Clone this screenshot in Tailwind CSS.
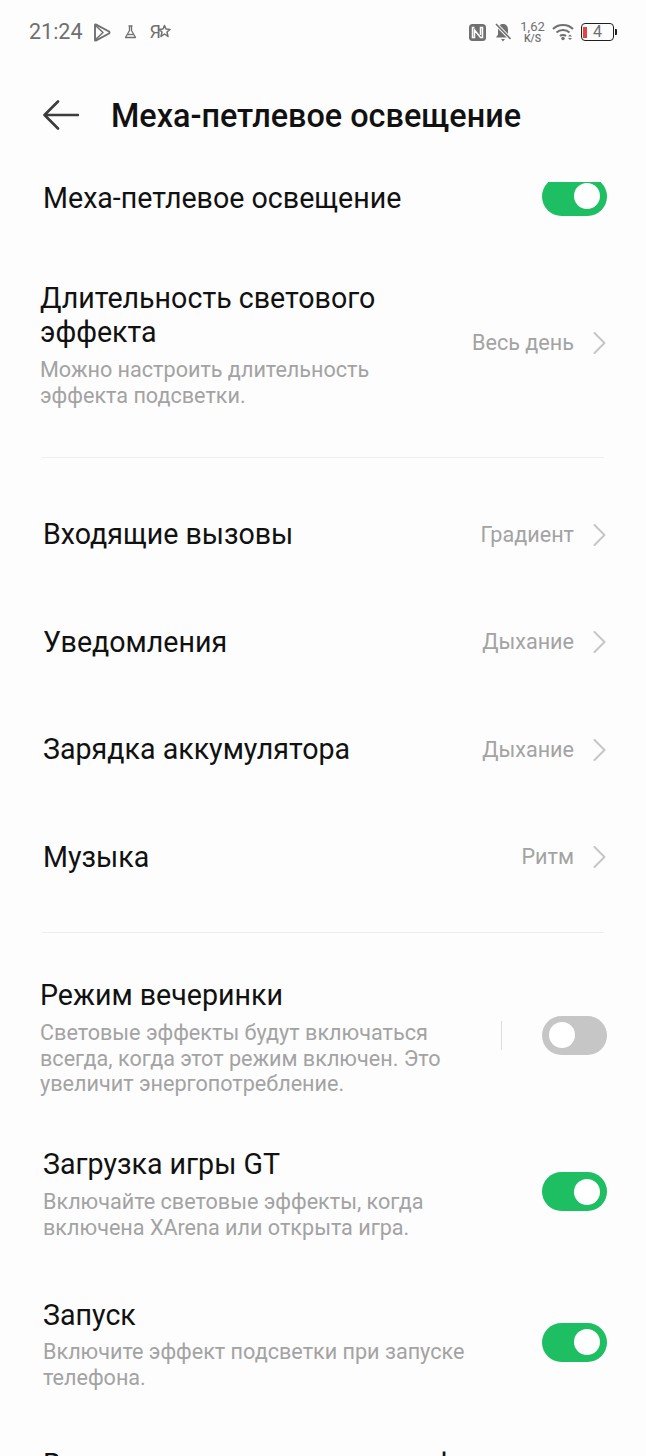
<!DOCTYPE html>
<html lang="ru">

<head>
    <meta charset="UTF-8">
    <meta name="viewport" content="width=device-width, initial-scale=1.0">
    <title>Меха-петлевое освещение</title>
    <script src="https://cdn.jsdelivr.net/npm/@tailwindcss/browser@4"></script>
</head>

<body class="bg-[#fdfdfd] font-['Roboto',sans-serif]">
    <div class="w-[646px] h-[1456px] overflow-hidden flex flex-col">

        <!-- Status bar -->
        <div class="h-[64px] shrink-0 flex items-center justify-between pl-[29px] pr-[29px] text-[#6f6f6f]">
            <div class="flex items-center">
                <span class="text-[21.5px] leading-none">21:24</span>
                <svg class="ml-[10px]" width="18" height="19" viewBox="0 0 18 19" fill="none" stroke="#707070" stroke-width="1.9" stroke-linejoin="round">
                    <path d="M2 2 Q2 1 3.2 1.6 L16 8.5 Q17 9.5 16 10.5 L3.2 17.4 Q2 18 2 17 Z" />
                    <path d="M2.5 2.5 L10 9.5 L2.5 16.5" stroke-width="1.5" />
                </svg>
                <svg class="ml-[13px]" width="13" height="14" viewBox="0 0 13 14" fill="none" stroke="#707070" stroke-width="1.3" stroke-linejoin="round">
                    <path d="M4.5 1 H8.5 M5.5 1 V5.5 L1.5 12.5 H11.5 L7.5 5.5 V1" />
                    <path d="M3.5 9.5 H9.5" />
                </svg>
                <span class="ml-[13px] text-[18px] leading-none">Я</span>
                <svg class="-ml-[3px] -mt-[3px]" width="13" height="14" viewBox="0 0 13 14" fill="none" stroke="#707070" stroke-width="1.5" stroke-linejoin="round">
                    <path d="M6.5 1.5 L8 5 L12 5.4 L9 8 L10 12.5 L6.5 10 L3 12.5 L4 8 L1 5.4 L5 5 Z" />
                </svg>
            </div>
            <div class="flex items-center">
                <svg width="17" height="17" viewBox="0 0 17 17">
                    <rect x="0" y="0" width="17" height="17" rx="3.5" fill="#707070" />
                    <path d="M5.5 3.5 H3.5 V13.5 H5.5 V6 L11.5 13.5 H13.5 V3.5 H11.5 V11" fill="none" stroke="#fdfdfd" stroke-width="1.5" />
                </svg>
                <svg class="ml-[9px]" width="16" height="19" viewBox="0 0 16 19">
                    <path d="M8 1 C4.5 1 3 3.5 3 6.5 V11.5 L1 14.5 H15 L13 11.5 V6.5 C13 3.5 11.5 1 8 1 Z" fill="#707070" />
                    <path d="M6 16 H10 L8 18.5 Z" fill="#707070" />
                    <path d="M1 1 L15.5 16" stroke="#fdfdfd" stroke-width="3.5" />
                    <path d="M1 1 L15.5 16" stroke="#707070" stroke-width="1.6" />
                </svg>
                <div class="ml-[11px] w-[22px] flex flex-col items-center text-[#707070]">
                    <span class="text-[13px] leading-[13px]">1,62</span>
                    <span class="text-[10.5px] leading-[11px] font-medium">K/S</span>
                </div>
                <svg class="ml-[8px]" width="22" height="18" viewBox="0 0 22 18" fill="none" stroke="#707070" stroke-width="2">
                    <path d="M1 6 C6 0.5 16 0.5 21 6" />
                    <path d="M4.5 9.5 C8 6 14 6 17.5 9.5" />
                    <path d="M8 13 C9.5 11.5 12.5 11.5 14 13" />
                    <circle cx="11" cy="15.5" r="1.7" fill="#707070" stroke="none" />
                    <path d="M18 11.5 L20 13.5 H16 Z M16 15 H20 L18 17 Z" fill="#707070" stroke="none" />
                </svg>
                <div class="ml-[7px] flex items-center">
                    <div class="relative w-[33px] h-[18px] rounded-[4px] border-[1.5px] border-[#1f1f1f] flex items-center justify-center text-[16px] leading-none text-[#6f6f6f]">
                        <div class="absolute left-[1.5px] top-[2.5px] bottom-[2.5px] w-[4px] bg-[#e2463f]"></div>
                        <span class="ml-[1px]">4</span>
                    </div>
                    <div class="w-[2.5px] h-[6px] ml-[1px] bg-[#1f1f1f] rounded-r-[1px]"></div>
                </div>
            </div>
        </div>

        <!-- Header -->
        <div class="h-[118px] shrink-0 flex items-center pl-[43px] pb-[14px]">
            <svg class="-mt-[2px]" width="36" height="30" viewBox="0 0 36 30" fill="none" stroke="#3c3c3c" stroke-width="2.6" stroke-linecap="round" stroke-linejoin="round">
                <path d="M35 15 H2 M15 1.5 L1.5 15 L15 28.5" />
            </svg>
            <h1 class="ml-[32px] text-[32.4px] leading-none font-medium text-[#111]">Меха-петлевое освещение</h1>
        </div>

        <!-- Scroll area, clipped under the header -->
        <div class="flex-1 overflow-hidden">
            <div class="-mt-[6px]">

                <div class="h-[44px] flex items-center justify-between pl-[43px] pr-[39px]">
                    <span class="text-[28.6px] text-[#111]">Меха-петлевое освещение</span>
                    <div class="w-[65px] h-[39px] rounded-full bg-[#1dbf62] flex items-center justify-end px-[7px] -mt-[4px]">
                        <div class="w-[26px] h-[26px] rounded-full bg-white"></div>
                    </div>
                </div>

                <div class="mt-[61px] flex items-center justify-between pl-[40px] pr-[40px]">
                    <div class="w-[400px]">
                        <div class="text-[28.6px] leading-[34px] text-[#111]">Длительность светового эффекта</div>
                        <div class="mt-[8px] text-[21.6px] leading-[26px] text-[#a3a3a3]">Можно настроить длительность эффекта подсветки.</div>
                    </div>
                    <div class="flex items-center -mt-[3px]">
                        <span class="text-[21.6px] text-[#a3a3a3]">Весь день</span>
                        <svg class="ml-[19px]" width="13" height="22" viewBox="0 0 13 22" fill="none" stroke="#c6c6c6" stroke-width="2" stroke-linecap="round" stroke-linejoin="round">
                            <path d="M1.5 1 L11.5 11 L1.5 21" />
                        </svg>
                    </div>
                </div>

                <div class="mt-[48px] mx-[42px] h-px bg-[#eeeeee]"></div>

                <div class="mt-[23px] h-[107.5px] flex items-center justify-between pl-[43px] pr-[40px]">
                    <span class="text-[28.6px] text-[#111]">Входящие вызовы</span>
                    <div class="flex items-center">
                        <span class="text-[21.6px] text-[#a3a3a3]">Градиент</span>
                        <svg class="ml-[19px]" width="13" height="22" viewBox="0 0 13 22" fill="none" stroke="#c6c6c6" stroke-width="2" stroke-linecap="round" stroke-linejoin="round">
                            <path d="M1.5 1 L11.5 11 L1.5 21" />
                        </svg>
                    </div>
                </div>
                <div class="h-[107.5px] flex items-center justify-between pl-[43px] pr-[40px]">
                    <span class="text-[28.6px] text-[#111]">Уведомления</span>
                    <div class="flex items-center">
                        <span class="text-[21.6px] text-[#a3a3a3]">Дыхание</span>
                        <svg class="ml-[19px]" width="13" height="22" viewBox="0 0 13 22" fill="none" stroke="#c6c6c6" stroke-width="2" stroke-linecap="round" stroke-linejoin="round">
                            <path d="M1.5 1 L11.5 11 L1.5 21" />
                        </svg>
                    </div>
                </div>
                <div class="h-[107.5px] flex items-center justify-between pl-[43px] pr-[40px]">
                    <span class="text-[28.6px] text-[#111]">Зарядка аккумулятора</span>
                    <div class="flex items-center">
                        <span class="text-[21.6px] text-[#a3a3a3]">Дыхание</span>
                        <svg class="ml-[19px]" width="13" height="22" viewBox="0 0 13 22" fill="none" stroke="#c6c6c6" stroke-width="2" stroke-linecap="round" stroke-linejoin="round">
                            <path d="M1.5 1 L11.5 11 L1.5 21" />
                        </svg>
                    </div>
                </div>
                <div class="h-[107.5px] flex items-center justify-between pl-[43px] pr-[40px]">
                    <span class="text-[28.6px] text-[#111]">Музыка</span>
                    <div class="flex items-center">
                        <span class="text-[21.6px] text-[#a3a3a3]">Ритм</span>
                        <svg class="ml-[19px]" width="13" height="22" viewBox="0 0 13 22" fill="none" stroke="#c6c6c6" stroke-width="2" stroke-linecap="round" stroke-linejoin="round">
                            <path d="M1.5 1 L11.5 11 L1.5 21" />
                        </svg>
                    </div>
                </div>

                <div class="mt-[21px] mx-[42px] h-px bg-[#eeeeee]"></div>

                <div class="mt-[45px] flex items-center justify-between pl-[40px] pr-[39px]">
                    <div class="w-[410px]">
                        <div class="text-[28.6px] leading-[34px] text-[#111]">Режим вечеринки</div>
                        <div class="mt-[8px] text-[21.6px] leading-[25.5px] text-[#a3a3a3]">Световые эффекты будут включаться всегда, когда этот режим включен. Это увеличит энергопотребление.</div>
                    </div>
                    <div class="flex items-center -mt-[4px]">
                        <div class="w-px h-[29px] bg-[#dddddd]"></div>
                        <div class="ml-[40px] w-[65px] h-[39px] rounded-full bg-[#c6c6c6] flex items-center px-[7px]">
                            <div class="w-[26px] h-[26px] rounded-full bg-white"></div>
                        </div>
                    </div>
                </div>

                <div class="mt-[50px] flex items-center justify-between pl-[43px] pr-[39px]">
                    <div class="w-[420px]">
                        <div class="text-[28.6px] leading-[34px] text-[#111]">Загрузка игры GT</div>
                        <div class="mt-[8px] text-[21.6px] leading-[26px] text-[#a3a3a3]">Включайте световые эффекты, когда включена XArena или открыта игра.</div>
                    </div>
                    <div class="w-[65px] h-[39px] rounded-full bg-[#1dbf62] flex items-center justify-end px-[7px] -mt-[4px]">
                        <div class="w-[26px] h-[26px] rounded-full bg-white"></div>
                    </div>
                </div>

                <div class="mt-[57px] flex items-center justify-between pl-[43px] pr-[39px]">
                    <div class="w-[425px]">
                        <div class="text-[28.6px] leading-[34px] text-[#111]">Запуск</div>
                        <div class="mt-[7px] text-[21.6px] leading-[26px] text-[#a3a3a3]">Включите эффект подсветки при запуске телефона.</div>
                    </div>
                    <div class="w-[65px] h-[39px] rounded-full bg-[#1dbf62] flex items-center justify-end px-[7px] -mt-[4px]">
                        <div class="w-[26px] h-[26px] rounded-full bg-white"></div>
                    </div>
                </div>

                <div class="mt-[56px] pl-[43px] text-[28.6px] leading-[34px] text-[#111]">Включите при поднятии телефона</div>
            </div>
        </div>
    </div>
</body>

</html>
